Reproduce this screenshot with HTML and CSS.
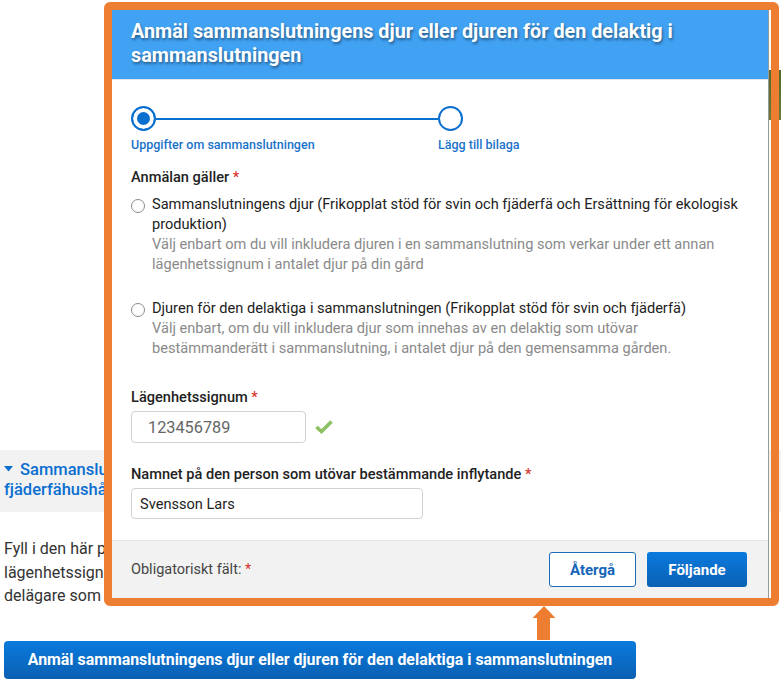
FILE: index.html
```html
<!DOCTYPE html>
<html lang="sv">
  <head>
    <meta charset="utf-8">
    <title>Anmäl sammanslutningens djur</title>
    <link rel="stylesheet" href="styles.css">
  </head>
  <body>
    <div class="page">
      <div class="banner"><div class="banner-pic"></div></div>

      <div class="section-head">
        <div class="behind">
          <svg class="caret" width="9" height="6" viewBox="0 0 9 6"><polygon points="0,0 9,0 4.5,5.5" fill="#0a6ed1"/></svg>Sammanslutni<br>fjäderfähushåll
        </div>
      </div>

      <p class="intro behind">
        Fyll i den här pu<br>
        lägenhetssignum<br>
        delägare som u
      </p>

      <button class="cta">Anmäl sammanslutningens djur eller djuren för den delaktiga i sammanslutningen</button>
    </div>

    <!-- dialog -->
    <div class="modal">
      <div class="modal-head">Anmäl sammanslutningens djur eller djuren för den delaktig i sammanslutningen</div>

      <div class="modal-body">
        <div class="stepper">
          <span class="step step-active"></span>
          <span class="step-line"></span>
          <span class="step"></span>
          <span class="step-label first">Uppgifter om sammanslutningen</span>
          <span class="step-label last">Lägg till bilaga</span>
        </div>

        <div class="field-label gap-top">Anmälan gäller <span class="req">*</span></div>
        <div class="options">
          <label class="option">
            <input type="radio" name="anmalan" class="radio">
            <span class="option-text">
              Sammanslutningens djur (Frikopplat stöd för svin och fjäderfä och Ersättning för ekologisk produktion)
              <span class="help">Välj enbart om du vill inkludera djuren i en sammanslutning som verkar under ett annan lägenhetssignum i antalet djur på din gård</span>
            </span>
          </label>
          <label class="option">
            <input type="radio" name="anmalan" class="radio">
            <span class="option-text">
              Djuren för den delaktiga i sammanslutningen (Frikopplat stöd för svin och fjäderfä)
              <span class="help">Välj enbart, om du vill inkludera djur som innehas av en delaktig som utövar<br>bestämmanderätt i sammanslutning, i antalet djur på den gemensamma gården.</span>
            </span>
          </label>
        </div>

        <div class="field-label signum-label">Lägenhetssignum <span class="req">*</span></div>
        <div class="input-row">
          <input type="text" class="text-input signum" value="123456789">
          <svg class="check" width="18" height="14" viewBox="0 0 18 14"><polyline points="1.5,7 6.5,11.5 16.5,1.5" fill="none" stroke="#8cc063" stroke-width="3.6"/></svg>
        </div>

        <div class="field-label person-label">Namnet på den person som utövar bestämmande inflytande <span class="req">*</span></div>
        <div class="input-row">
          <input type="text" class="text-input person" value="Svensson Lars">
        </div>
      </div>

      <div class="modal-foot">
        <span class="required-note">Obligatoriskt fält: <span class="req">*</span></span>
        <div class="actions">
          <button class="btn btn-outline">Återgå</button>
          <button class="btn btn-primary">Följande</button>
        </div>
      </div>
    </div>

    <!-- annotation -->
    <div class="frame"></div>
    <svg class="arrow" width="24" height="34" viewBox="0 0 24 34"><polygon points="12,0 23.5,12 18,12 18,34 5,34 5,12 0.5,12" fill="#ed7d31"/></svg>
  </body>
</html>
```

FILE: styles.css
```css
body { margin: 0; font-family: Roboto, "Liberation Sans", sans-serif; color: #222; background: #fff; }

.page { overflow: hidden; }
.banner { display: flex; justify-content: flex-end; padding-top: 70px; }
.banner-pic { width: 40px; height: 50px; background: linear-gradient(#4f6a2c, #6b7a38); }

/* page text that runs in under the dialog */
.behind { white-space: nowrap; }

.section-head { margin-top: 330px; height: 62px; box-sizing: border-box; padding: 10px 0 0 4px; background: #f2f2f2; color: #0a6ed1; font-size: 16.5px; font-weight: 500; line-height: 20px; }
.caret { margin-right: 7px; vertical-align: 3px; }

.intro { margin: 25px 0 0; padding-left: 4px; font-size: 16px; line-height: 23.5px; color: #333; }

.cta { display: block; margin: 33px 0 0 4px; width: 632px; height: 38px; border: none; border-radius: 4px; background: linear-gradient(#0a7ade, #0b60b2); color: #fff; font-family: Roboto, "Liberation Sans", sans-serif; font-size: 15.9px; font-weight: 700; }

/* dialog */
.modal { position: absolute; left: 112px; top: 10px; width: 656px; height: 588px; display: flex; flex-direction: column; background: #fff; box-shadow: 1px 0 0 #9a9a9a; }
.modal-head { padding: 10px 21px 11px 19px; background: #41a2f4; color: #fff; font-size: 19.8px; font-weight: 700; line-height: 24px; text-shadow: 1px 2px 3px rgba(0, 0, 0, 0.45); border-bottom: 1px solid #e4e4e4; }
.modal-body { flex: 1; padding: 26px 21px 0 19px; }

.stepper { display: grid; grid-template-columns: 25px 1fr 25px; grid-template-rows: 25px auto; row-gap: 6px; width: 332px; }
.step { box-sizing: border-box; width: 25px; height: 25px; border: 2.5px solid #0b6fcf; border-radius: 50%; background: #fff; }
.step-active { background: #0b6fcf; box-shadow: inset 0 0 0 4px #fff; }
.step-line { height: 2px; align-self: center; background: #0b6fcf; }
.step-label { font-size: 12.5px; font-weight: 500; line-height: 16px; color: #1a73c9; white-space: nowrap; }
.step-label.first { grid-column: 1 / 3; }
.step-label.last { grid-column: 3; }

.field-label { font-size: 14.6px; font-weight: 500; line-height: 20px; color: #222; }
.req { color: #d6372e; }
.gap-top { margin-top: 14px; }
.signum-label { margin-top: 29px; }
.person-label { margin-top: 21px; }

.options { margin-top: 7px; }
.option { display: flex; gap: 7px; }
.option + .option { margin-top: 24px; }
.radio { flex-shrink: 0; appearance: none; width: 14px; height: 14px; margin: 5px 0 0; border: 1px solid #8a8a8a; border-radius: 50%; background: #fff; }
.option-text { font-size: 14.6px; line-height: 20px; color: #222; }
.help { display: block; color: #8a8a8a; }

.input-row { display: flex; align-items: center; margin-top: 4px; }
.text-input { box-sizing: border-box; border: 1px solid #d2d2d2; border-radius: 4px; font-family: Roboto, "Liberation Sans", sans-serif; background: #fff; }
.signum { width: 175px; height: 32px; padding: 0 0 0 16px; font-size: 16.3px; color: #666; }
.person { width: 292px; height: 31px; padding: 0 0 0 8px; font-size: 14.6px; color: #222; }
.check { margin-left: 9px; }

.modal-foot { box-sizing: border-box; height: 58px; display: flex; align-items: center; justify-content: space-between; padding: 0 21px 0 19px; background: #f2f2f2; border-top: 1px solid #e6e6e6; }
.required-note { font-size: 14.5px; color: #444; }
.actions { display: flex; gap: 11px; }
.btn { height: 35px; border-radius: 3px; font-family: Roboto, "Liberation Sans", sans-serif; font-size: 15px; font-weight: 700; }
.btn-outline { width: 87px; border: 1px solid #1c6bbd; background: #fff; color: #1565b8; }
.btn-primary { width: 100px; border: none; background: linear-gradient(#0a7ade, #0b60b2); color: #fff; }

/* annotation */
.frame { position: absolute; left: 104px; top: 2px; width: 675px; height: 604px; box-sizing: border-box; border: 8px solid #ed7d31; border-radius: 6px; pointer-events: none; }
.arrow { position: absolute; left: 532px; top: 606px; }
```
